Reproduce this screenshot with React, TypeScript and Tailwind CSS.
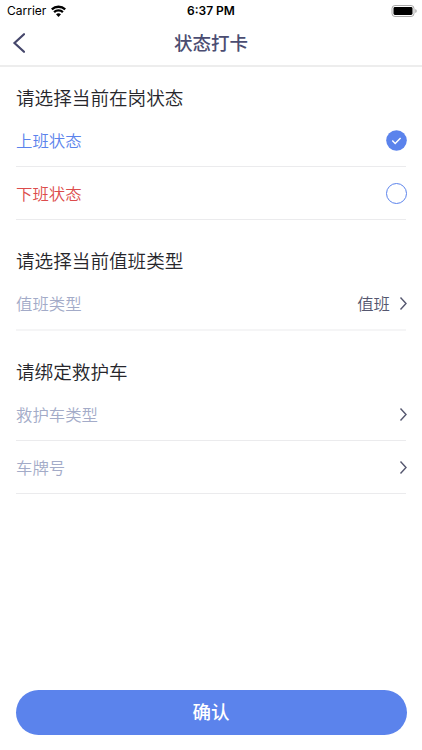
import type { ReactNode } from "react";

function Section({ title, className, children }: { title: string; className: string; children: ReactNode }) {
  return (
    <section className={className}>
      <h2 className="h-[31px] text-[18.6px] leading-[27px] font-[350] text-[#26262b]">{title}</h2>
      {children}
    </section>
  );
}

function Chevron() {
  return (
    <svg className="ml-[9px] h-[14px] w-[8px]" viewBox="0 0 8 14" fill="none" stroke="#55576f" strokeWidth="1.4">
      <path d="M1.5 1.5l5.5 6-5.5 6" />
    </svg>
  );
}

type RowProps = {
  label: string;
  color?: string;
  border?: string;
  children: ReactNode;
};

function Row({ label, color = "text-[#a3abc8]", border = "h-[53px] border-b border-[#ebebed]", children }: RowProps) {
  return (
    <div className={`flex items-center justify-between text-[16.4px] font-[350] ${border}`}>
      <span className={color}>{label}</span>
      <div className="-mr-px flex items-center">{children}</div>
    </div>
  );
}

export default function App() {
  return (
    <div className="flex h-[750px] w-[422px] flex-col bg-white font-['Noto_Sans_CJK_SC',sans-serif]">
      <div className="grid h-[21px] grid-cols-3 items-center px-[7px] font-['Inter',sans-serif] text-[12px] text-black">
        <div className="flex items-center gap-[5px]">
          <span>Carrier</span>
          <svg className="h-[12px] w-[15px]" viewBox="0 0 15 12" fill="none" stroke="#000" strokeWidth="2.3">
            <path d="M.8 4.4a9.8 9.8 0 0 1 13.4 0M3.1 7.2a6.4 6.4 0 0 1 8.8 0" />
            <path d="M5 9.3a3.7 3.7 0 0 1 5 0L7.5 12z" fill="#000" stroke="none" />
          </svg>
        </div>
        <span className="text-center font-semibold">6:37 PM</span>
        <svg className="-mr-[2px] h-[12px] w-[26px] justify-self-end" viewBox="0 0 26 12" fill="none">
          <rect x="1" y=".5" width="22" height="11" rx="3" stroke="#aaa" />
          <rect x="2.5" y="2" width="19" height="8" rx="1.4" fill="#000" />
          <path d="M24.4 4v4q1.2-.6 1.2-2t-1.2-2" fill="#999" />
        </svg>
      </div>
      <header className="grid h-[46px] grid-cols-3 items-center border-b-2 border-[#ededed] px-[12px]">
        <svg
          className="h-[20px] w-[13px]"
          viewBox="0 0 13 20"
          fill="none"
          stroke="#45476b"
          strokeWidth="2.2"
          strokeLinecap="round"
        >
          <path d="M12 1.2l-9.5 8.8 9.5 8.8" />
        </svg>
        <h1 className="text-center text-[18.5px] font-medium text-[#4b4d72]">状态打卡</h1>
      </header>
      <main className="flex-1 px-[16px]">
        <Section title="请选择当前在岗状态" className="pt-[16px]">
          <Row label="上班状态" color="text-[#5b83ec]">
            <svg className="h-[21px] w-[21px]" viewBox="0 0 21 21" fill="none">
              <circle cx="10.5" cy="10.5" r="10.3" fill="#5b83ec" />
              <path d="M6.3 10.6l2.9 2.9 5.4-5.6" stroke="#fff" strokeWidth="1.4" />
            </svg>
          </Row>
          <Row label="下班状态" color="text-[#dc4c4c]">
            <span className="h-[21px] w-[21px] rounded-full border border-[#5b83ec]" />
          </Row>
        </Section>
        <Section title="请选择当前值班类型" className="pt-[26px]">
          <Row label="值班类型" border="h-[54px] border-b-2 border-[#f5f5f6]">
            <span className="text-[#55576f]">值班</span>
            <Chevron />
          </Row>
        </Section>
        <Section title="请绑定救护车" className="pt-[26px]">
          <Row label="救护车类型">
            <Chevron />
          </Row>
          <Row label="车牌号">
            <Chevron />
          </Row>
        </Section>
      </main>
      <footer className="px-[15.5px] pb-[15.5px]">
        <button className="h-[45px] w-full rounded-full bg-[#5b83ec] text-[18.5px] font-medium text-white">确认</button>
      </footer>
    </div>
  );
}
